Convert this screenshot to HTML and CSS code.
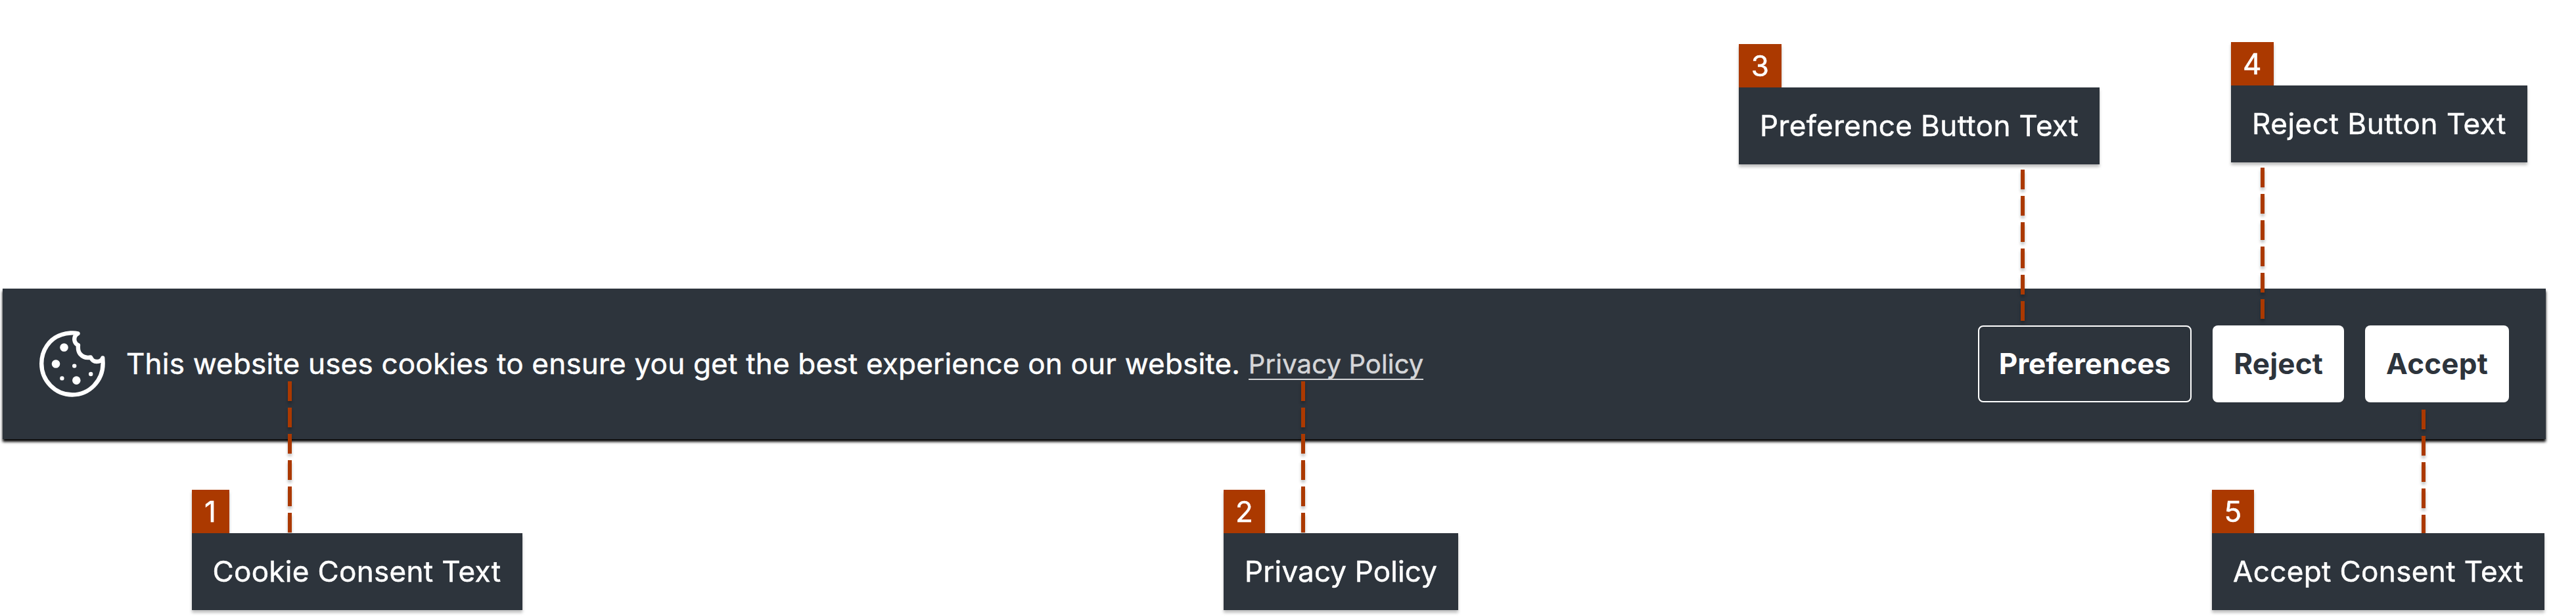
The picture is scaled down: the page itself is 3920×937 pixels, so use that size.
FILE: index.html
```html
<!DOCTYPE html>
<html lang="en">
<head>
<meta charset="utf-8">
<title>Cookie consent banner</title>
<link rel="stylesheet" href="styles.css">
</head>
<body>
<main class="diagram">
  <section class="banner">
    <svg class="cookie" viewBox="0 0 140 130" aria-hidden="true">
      <path class="outline" d="M78.500 17.300C73 15.800 62 16 54 19C35 25 23.200 43 23.200 63C23.200 89 44 110.500 70 110.500C96 110.500 117 89 116.600 62L116.200 54.500C115 58 112 60 107 60C102 60 99.500 57 98 53.500C91 55 86 53 82 48.500C79 45 78.500 40 79 35C74 33 72 27 74 22C75 19.500 76.500 18.300 78.500 17.300Z"/>
      <circle cx="57.500" cy="38.500" r="6.300"/>
      <circle cx="45" cy="63.500" r="6.300"/>
      <circle cx="76.300" cy="88.600" r="6.300"/>
      <circle cx="73.200" cy="66.600" r="3.200"/>
      <circle cx="98.200" cy="79" r="3.200"/>
      <circle cx="54.400" cy="85.400" r="3.200"/>
    </svg>
    <p class="message">This website uses cookies to ensure you get the best experience on our website. <a class="policy">Privacy Policy</a></p>
    <div class="actions">
      <button class="btn btn-outline">Preferences</button>
      <button class="btn">Reject</button>
      <button class="btn">Accept</button>
    </div>
  </section>

  <i class="line line-1"></i>
  <i class="line line-2"></i>
  <i class="line line-3"></i>
  <i class="line line-4"></i>
  <i class="line line-5"></i>

  <div class="note note-1"><span class="num">1</span><span class="label">Cookie Consent Text</span></div>
  <div class="note note-2"><span class="num">2</span><span class="label">Privacy Policy</span></div>
  <div class="note note-3"><span class="num">3</span><span class="label">Preference Button Text</span></div>
  <div class="note note-4"><span class="num">4</span><span class="label">Reject Button Text</span></div>
  <div class="note note-5"><span class="num">5</span><span class="label">Accept Consent Text</span></div>
</main>
</body>
</html>
```
FILE: styles.css
```css
* { box-sizing: border-box; }

body {
  margin: 0;
  background: #fff;
  font-family: Inter, "Liberation Sans", sans-serif;
  font-size: 44px;
  line-height: 53px;
  color: #fff;
}

.diagram {
  position: relative;
  width: 3920px;
  height: 937px;
  padding: 439px 46px 0 4px;
  overflow: hidden;
}

.banner {
  display: flex;
  align-items: center;
  height: 229px;
  padding: 0 56px;
  background: #2d343c;
  box-shadow: 0 4px 4px #000;
}

.cookie {
  flex: none;
  width: 140px;
  height: 130px;
  margin: 3px -8px 0 -20px;
  fill: #fff;
}

.cookie .outline {
  fill: none;
  stroke: #fff;
  stroke-width: 6.4;
  stroke-linejoin: round;
}

.message {
  margin: 0 auto 0 20px;
  white-space: nowrap;
  letter-spacing: .2px;
  -webkit-text-stroke: .5px;
}

.policy {
  display: inline-block;
  font-size: 40px;
  line-height: 45px;
  letter-spacing: .14px;
  vertical-align: 1px;
  color: #d5d6d8;
  border-bottom: 2px solid #d5d6d8;
}

.actions { display: flex; gap: 32px; }

.btn {
  height: 117px;
  padding: 0 32px;
  border: 0;
  border-radius: 8px;
  background: #fff;
  color: #2d343c;
  font: 700 44px/53px Inter, "Liberation Sans", sans-serif;
  letter-spacing: .2px;
}

.btn-outline {
  padding: 0 30px;
  border: 2px solid #fff;
  background: transparent;
  color: #fff;
  letter-spacing: 0;
}

/* Callouts pinned around the banner */
.note {
  position: absolute;
  display: flex;
  flex-direction: column;
  align-items: flex-start;
  -webkit-text-stroke: .5px;
  filter: drop-shadow(0 4px 2px rgba(0, 0, 0, .25));
}

.num {
  width: 65px;
  height: 66px;
  line-height: 66px;
  text-align: center;
  background: #ab3900;
}

.label {
  width: 100%;
  height: 117px;
  padding: 32px 0;
  text-align: center;
  white-space: nowrap;
  background: #2d343c;
}

.note-1 { left: 291.5px; top: 745.4px; width: 503px; letter-spacing: .33px; }
.note-1 .num { width: 57px; }
.note-2 { left: 1862px; top: 745.4px; width: 357px; letter-spacing: .13px; }
.note-2 .num { width: 63px; }
.note-3 { left: 2646px; top: 67.4px; width: 549px; letter-spacing: .38px; }
.note-4 { left: 3395px; top: 64.4px; width: 451px; letter-spacing: .54px; }
.note-5 { left: 3366px; top: 745px; width: 506px; letter-spacing: .37px; }
.note-5 .num { width: 64px; }

/* Dashed connectors */
.line {
  position: absolute;
  width: 6px;
  height: 230px;
  background: repeating-linear-gradient(#ab3900 0 30px, transparent 30px 40px);
  filter: drop-shadow(0 4px 2px rgba(0, 0, 0, .25));
}

.line-1 { left: 437.5px; top: 580px; }
.line-2 { left: 1980.3px; top: 580px; }
.line-3 { left: 3075px; top: 258px; }
.line-4 { left: 3440px; top: 255px; }
.line-5 { left: 3685px; top: 623px; height: 188px; }
```
